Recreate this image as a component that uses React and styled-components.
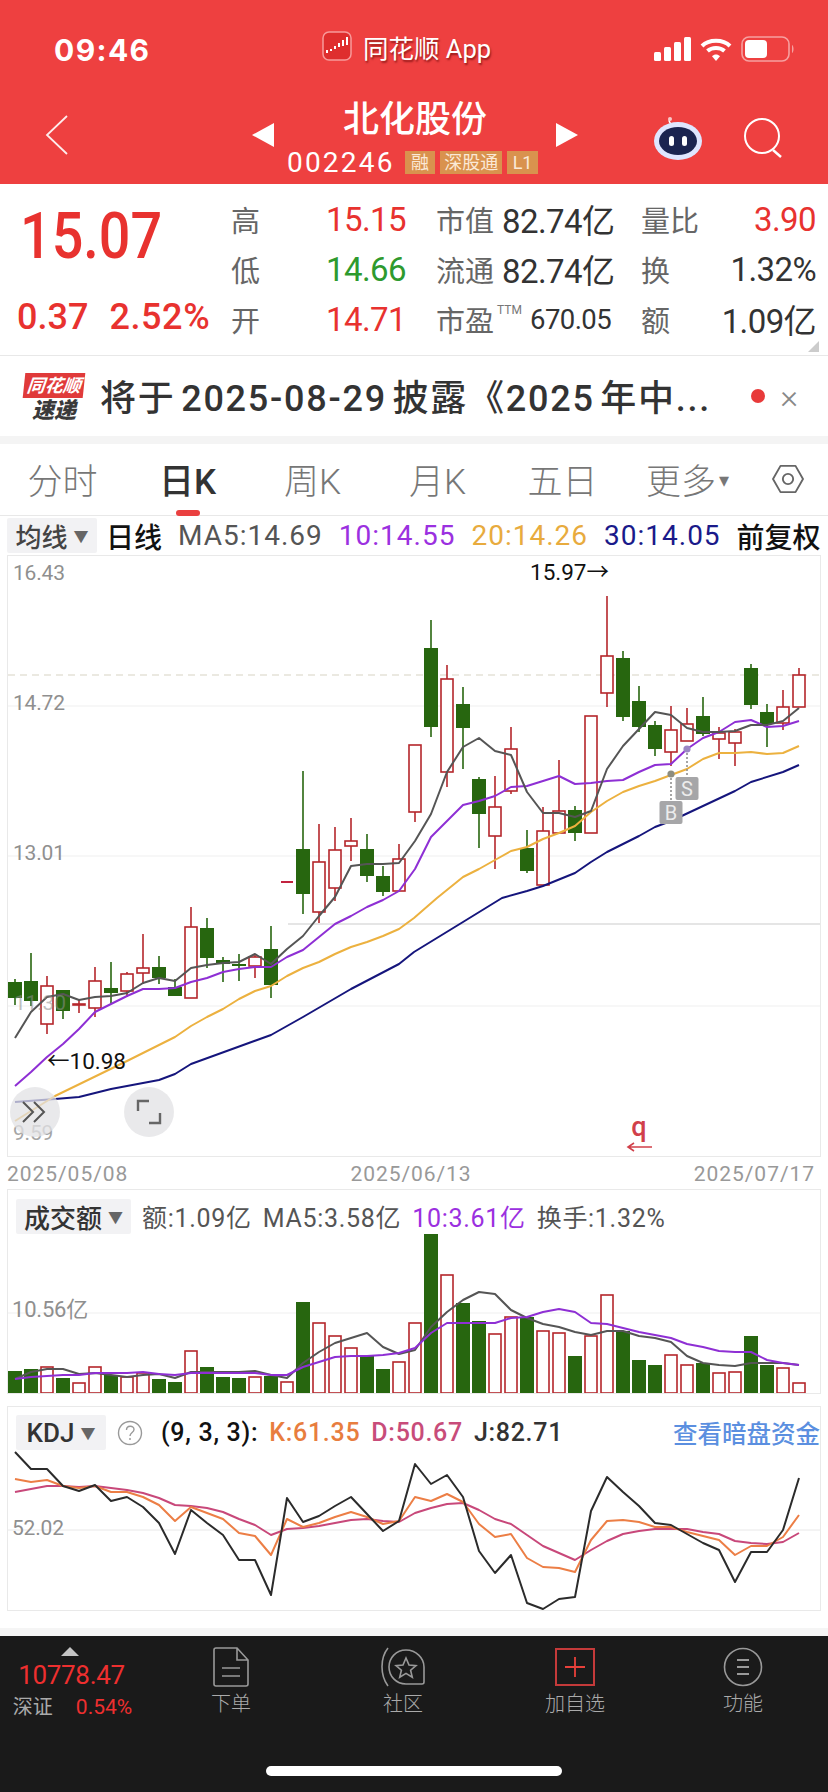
import styled, { createGlobalStyle } from "styled-components";

const FONT = `Roboto, "Noto Sans CJK SC", sans-serif`;
const RED = "#e8322f";
const CANDLE_RED = "#b5262b";
const CANDLE_GREEN = "#27660f";

const GlobalStyle = createGlobalStyle`
  * { box-sizing: border-box; }
  html, body { margin: 0; padding: 0; background: #fff; }
  body { font-family: ${FONT}; }
`;

const Page = styled.div`
  width: 828px;
  height: 1792px;
  display: flex;
  flex-direction: column;
  overflow: hidden;
  background: #fff;
`;

/* header */
const Header = styled.header`
  height: 184px;
  flex: none;
  background: #ee4040;
  color: #fff;
`;
const StatusBar = styled.div`
  height: 92px;
  display: grid;
  grid-template-columns: 268px 1fr auto;
  align-items: center;
  padding: 0 33px 0 54px;
`;
const Clock = styled.div`
  font-family: Inter, sans-serif;
  font-size: 30px;
  font-weight: 700;
  letter-spacing: 1.4px;
  margin-top: 8px;
`;
const AppLabel = styled.div`
  display: flex;
  align-items: center;
  gap: 11px;
  font-size: 25.5px;
  text-shadow: 1px 2px 2px rgba(90, 0, 0, 0.6);
`;
const StatusIcons = styled.div`
  display: flex;
  align-items: center;
  gap: 9px;
  margin-top: 6px;
`;
const NavBar = styled.div`
  height: 92px;
  display: grid;
  grid-template-columns: 1fr auto 1fr;
  align-items: center;
  padding: 0 43px 0 45px;
`;
const NavRight = styled.div`
  display: flex;
  justify-content: flex-end;
  align-items: center;
  gap: 40px;
  margin-top: -1px;
`;
const NavBack = styled.div`
  margin-top: -2px;
`;
const NavCenter = styled.div`
  display: flex;
  align-items: center;
  gap: 13px;
`;
const Arrow = styled.div`
  width: 0;
  height: 0;
  border-top: 12px solid transparent;
  border-bottom: 12px solid transparent;
  ${(p) => (p.$right ? "border-left: 22px solid #fff;" : "border-right: 22px solid #fff;")}
  margin-top: -7px;
`;
const TitleBox = styled.div`
  display: flex;
  flex-direction: column;
  align-items: center;
  height: 92px;
  width: 256px;
`;
const Title = styled.div`
  font-size: 36px;
  font-weight: 500;
  line-height: 48px;
  margin-top: 4px;
`;
const CodeRow = styled.div`
  display: flex;
  align-items: center;
  height: 24px;
  margin-top: 6px;
  align-self: stretch;
`;
const Code = styled.span`
  font-size: 28px;
  letter-spacing: 2.2px;
  margin-right: 10px;
`;
const Tag = styled.span`
  background: #d9924e;
  color: #fbe9d6;
  font-size: 18px;
  line-height: 23px;
  height: 23px;
  width: ${(p) => p.$w}px;
  text-align: center;
  margin-right: 5px;
`;

/* quote */
const Quote = styled.section`
  height: 172px;
  flex: none;
  position: relative;
  display: flex;
  border-bottom: 1px solid #e8e8e8;
`;
const PriceBox = styled.div`
  width: 231px;
  flex: none;
  padding: 15px 0 0 17px;
`;
const BigPrice = styled.div`
  font-size: 64px;
  font-weight: 500;
  line-height: 76px;
  color: ${RED};
  margin-left: 3px;
  transform: scaleX(0.87);
  transform-origin: left;
`;
const ChangeRow = styled.div`
  display: flex;
  gap: 21px;
  font-size: 36px;
  font-weight: 500;
  line-height: 44px;
  margin-top: 20px;
  color: ${RED};
  span + span { letter-spacing: 0.6px; }
`;
const StatGrid = styled.div`
  display: grid;
  grid-template-columns: repeat(3, 175px);
  grid-auto-rows: 50px;
  column-gap: 30px;
  padding-top: 10px;
`;
const Stat = styled.div`
  display: flex;
  justify-content: space-between;
  align-items: center;
  gap: 8px;
`;
const StatLabel = styled.span`
  font-size: 29px;
  color: #666;
  white-space: nowrap;
  sup {
    font-size: 12px;
    vertical-align: 18px;
    line-height: 0;
    margin-left: 3px;
    color: #777;
  }
`;
const StatValue = styled.span`
  font-size: ${(p) => p.$size || 33}px;
  letter-spacing: -0.6px;
  color: ${(p) => p.$color || "#333"};
  white-space: nowrap;
`;
const Corner = styled.div`
  position: absolute;
  right: 9px;
  bottom: 3px;
  width: 0;
  height: 0;
  border-left: 11px solid transparent;
  border-bottom: 11px solid #ccc;
`;

/* notice */
const Notice = styled.section`
  height: 80px;
  flex: none;
  display: flex;
  align-items: center;
  padding: 0 30px 0 23px;
`;
const Logo = styled.div`
  width: 62px;
  flex: none;
  display: flex;
  flex-direction: column;
  align-items: center;
  margin-top: 4px;
`;
const LogoTop = styled.div`
  width: 60px;
  height: 25px;
  background: #e03a3a;
  color: #fff;
  font-size: 18px;
  font-style: italic;
  font-weight: 700;
  line-height: 25px;
  text-align: center;
  transform: skewX(-6deg);
`;
const LogoBottom = styled.div`
  font-size: 22px;
  font-style: italic;
  font-weight: 900;
  line-height: 26px;
  color: #3a3a3a;
`;
const NoticeText = styled.div`
  flex: 1;
  margin-left: 15px;
  font-size: 36px;
  font-weight: 500;
  letter-spacing: 1.75px;
  word-spacing: -5px;
  color: #333;
  white-space: nowrap;
  margin-top: -2px;
`;
const RedDot = styled.i`
  width: 14px;
  height: 14px;
  border-radius: 50%;
  background: #e83a3a;
  margin-right: 15px;
`;
const CloseMark = styled.span`
  font-size: 34px;
  color: #888;
  font-weight: 300;
`;
const Band = styled.div`
  height: 8px;
  flex: none;
  background: #f4f4f4;
`;

/* tabs */
const Tabs = styled.nav`
  height: 72px;
  flex: none;
  display: grid;
  grid-template-columns: repeat(6, 125px) 1fr;
  align-items: center;
  border-bottom: 1px solid #e8e8e8;
`;
const Tab = styled.div`
  position: relative;
  height: 72px;
  padding-bottom: 4px;
  display: flex;
  align-items: center;
  justify-content: center;
  font-size: 35px;
  font-weight: ${(p) => (p.$active ? 500 : 300)};
  color: ${(p) => (p.$active ? "#333" : "#777")};
  white-space: nowrap;
  &::after {
    content: "";
    display: ${(p) => (p.$active ? "block" : "none")};
    position: absolute;
    left: 50%;
    margin-left: -12px;
    bottom: 0;
    width: 24px;
    height: 6px;
    border-radius: 3px;
    background: #ea4040;
  }
  small {
    font-size: 20px;
    margin-left: 3px;
    margin-top: 4px;
  }
`;
const TabIcon = styled.div`
  display: flex;
  justify-content: center;
  padding-right: 2px;
  margin-top: -3px;
`;

/* MA row */
const MaRow = styled.div`
  height: 39px;
  flex: none;
  display: flex;
  align-items: center;
  gap: 16px;
  padding-left: 7px;
  font-size: 28px;
  letter-spacing: 1px;
  white-space: nowrap;
`;
const Selector = styled.div`
  display: flex;
  align-items: center;
  justify-content: center;
  gap: 6px;
  background: #f2f2f4;
  color: ${(p) => p.$color || "#444"};
  font-size: ${(p) => p.$size || 26}px;
  letter-spacing: 0;
  width: ${(p) => p.$w}px;
  height: 35px;
  font-weight: 500;
  border-radius: 2px;
  small {
    font-size: 15px;
    color: #666;
  }
`;
const MaText = styled.span`
  color: ${(p) => p.$color || "#555"};
`;
const DarkText = styled.span`
  color: #111;
  font-weight: 500;
  letter-spacing: 0;
  margin-left: ${(p) => p.$ml || 0}px;
`;

/* charts */
const Panel = styled.section`
  position: relative;
  flex: none;
  width: 814px;
  height: ${(p) => p.$h}px;
  margin-left: 7px;
  margin-bottom: ${(p) => p.$mb || 0}px;
  border: 1px solid #e9e9e9;
  overflow: hidden;
  svg { display: block; position: absolute; left: -1px; top: -1px; }
`;
const PanelHead = styled.div`
  position: relative;
  z-index: 2;
  display: flex;
  align-items: center;
  gap: 11px;
  padding: 8px 0 0 8px;
  font-size: 25px;
  letter-spacing: 0.7px;
  white-space: nowrap;
`;
const HeadText = styled.span`
  color: ${(p) => p.$color || "#555"};
  font-weight: ${(p) => p.$w || 400};
  margin-left: ${(p) => p.$ml || 0}px;
`;
const HeadLink = styled.span`
  margin-left: auto;
  color: #5b8fe0;
  letter-spacing: 0;
  font-weight: 500;
  font-size: 24.5px;
`;
const RoundButton = styled.div`
  position: absolute;
  top: 531px;
  left: ${(p) => p.$left}px;
  width: 50px;
  height: 50px;
  border-radius: 50%;
  background: rgba(226, 226, 228, 0.75);
  display: flex;
  align-items: center;
  justify-content: center;
  svg { position: static; }
`;
const DateRow = styled.div`
  height: 32px;
  flex: none;
  display: flex;
  align-items: center;
  justify-content: space-between;
  padding: 2px 13px 0 7px;
  font-size: 21px;
  letter-spacing: 0.95px;
  color: #999;
`;
const AxisText = styled.text`
  font-family: ${FONT};
  font-size: ${(p) => p.$size || 21}px;
  font-weight: ${(p) => p.$w || 400};
  letter-spacing: ${(p) => (p.$size ? 0 : -0.2)}px;
  fill: ${(p) => p.$fill || "#8f8f8f"};
  opacity: ${(p) => p.$op || 1};
`;

/* footer */
const Bottom = styled.div`
  height: 17px;
  flex: none;
`;
const Strip = styled.div`
  height: 8px;
  flex: none;
  background: #f5f5f5;
`;
const Footer = styled.footer`
  flex: 1;
  display: flex;
  flex-direction: column;
  background: #1a1a1a;
`;
const FooterRow = styled.div`
  display: flex;
  padding-top: 11px;
`;
const IndexBox = styled.div`
  width: 145px;
  flex: none;
  display: flex;
  flex-direction: column;
  align-items: center;
`;
const UpMark = styled.div`
  width: 0;
  height: 0;
  border-left: 9px solid transparent;
  border-right: 9px solid transparent;
  border-bottom: 9px solid #c4c4c4;
  margin-left: -5px;
`;
const IndexValue = styled.div`
  font-size: 26px;
  letter-spacing: -0.3px;
  line-height: 34px;
  margin-top: 2px;
  margin-left: -2px;
  color: #ee2f2f;
`;
const IndexSub = styled.div`
  display: flex;
  gap: 23px;
  align-items: center;
  font-size: 21px;
  line-height: 30px;
  color: #ee2f2f;
  span:first-child { color: #aaa; font-size: 20px; }
`;
const FooterItem = styled.div`
  width: ${(p) => p.$w || 172}px;
  flex: none;
  display: flex;
  flex-direction: column;
  align-items: center;
  color: #aaa;
  font-size: 20px;
  font-weight: 300;
  svg { display: block; height: 40px; }
  span { line-height: 28px; margin-top: 3px; }
`;
const HomeBar = styled.div`
  width: 296px;
  height: 10px;
  border-radius: 5px;
  background: #fff;
  align-self: center;
  margin: auto 0 16px;
`;

/* data */
const X = (i) => 15 + 16 * i;
const toPts = (ys) => ys.map((y, i) => `${X(i)},${y}`).join(" ");
const toPairs = (arr) => arr.map(([x, y]) => `${x},${y}`).join(" ");

// [up, top, bottom, wickTop, wickBottom]
const candles = [
  [0, 983, 999, 980, 1006], [0, 982, 1002, 954, 1007], [1, 987, 1025, 977, 1035], [0, 991, 1012, 991, 1020],
  [1, 1005, 1006, 1001, 1014], [1, 982, 1009, 968, 1018], [0, 989, 994, 963, 1005], [1, 975, 992, 973, 998],
  [1, 969, 974, 935, 985], [0, 968, 979, 957, 985], [0, 988, 997, 980, 997], [1, 928, 999, 908, 999],
  [0, 929, 959, 919, 969], [0, 961, 965, 958, 983], [0, 965, 967, 955, 982], [1, 958, 967, 955, 979],
  [0, 950, 986, 927, 999], [1, 883, 883, 883, 883], [0, 850, 895, 772, 915], [1, 863, 913, 825, 924],
  [1, 851, 889, 828, 902], [1, 842, 847, 819, 862], [0, 850, 877, 835, 883], [0, 877, 893, 867, 897],
  [1, 860, 892, 845, 892], [1, 746, 813, 746, 823], [0, 649, 728, 621, 738], [1, 680, 773, 666, 788],
  [0, 705, 729, 688, 770], [0, 780, 815, 778, 849], [1, 808, 837, 777, 870], [1, 750, 792, 728, 795],
  [0, 849, 872, 831, 874], [1, 832, 886, 808, 886], [1, 812, 834, 761, 834], [0, 811, 834, 807, 842],
  [1, 717, 834, 717, 834], [1, 657, 694, 597, 708], [0, 659, 718, 652, 722], [0, 702, 728, 687, 733],
  [0, 726, 750, 722, 757], [1, 731, 753, 707, 767], [1, 725, 742, 709, 742], [0, 717, 735, 698, 737],
  [1, 734, 740, 728, 760], [1, 733, 744, 730, 767], [0, 669, 706, 665, 710], [0, 713, 725, 705, 748],
  [1, 708, 724, 691, 731], [1, 676, 708, 669, 708],
];

const ma5 = [1039, 1013, 998, 995, 1001, 998, 997, 994, 984, 979, 982, 969, 966, 964, 963, 955, 965, 950, 937, 917, 898, 867, 865, 865, 864, 842, 815, 773, 748, 739, 752, 756, 793, 814, 814, 818, 812, 770, 747, 730, 713, 716, 729, 733, 733, 732, 726, 726, 722, 709];
const ma10 = [1087, 1073, 1058, 1045, 1030, 1013, 1005, 997, 990, 990, 989, 983, 979, 973, 970, 968, 968, 958, 951, 938, 925, 917, 908, 901, 892, 870, 838, 822, 806, 802, 797, 788, 787, 782, 777, 785, 784, 782, 781, 773, 766, 765, 750, 739, 733, 723, 721, 728, 727, 722];
const ma20 = [[15, 1122], [55, 1097], [127, 1062], [175, 1038], [191, 1027], [207, 1018], [223, 1010], [239, 1000], [255, 992], [271, 987], [287, 977], [303, 969], [319, 963], [335, 955], [351, 948], [367, 943], [383, 937], [399, 930], [414, 919], [437, 899], [463, 878], [479, 870], [495, 861], [511, 852], [527, 848], [543, 840], [559, 834], [575, 827], [591, 813], [607, 802], [623, 793], [639, 787], [655, 782], [671, 776], [687, 770], [703, 760], [719, 754], [735, 754], [751, 753], [767, 755], [783, 754], [799, 747]];
const ma30 = [[15, 1103], [55, 1100], [79, 1098], [111, 1090], [159, 1081], [175, 1075], [191, 1065], [271, 1036], [303, 1018], [351, 990], [399, 965], [414, 953], [463, 923], [502, 899], [527, 892], [543, 887], [575, 874], [591, 863], [607, 853], [639, 837], [655, 828], [671, 822], [703, 807], [735, 792], [751, 783], [783, 773], [799, 766]];

const volTops = [1371, 1369, 1367, 1378, 1383, 1367, 1375, 1377, 1373, 1379, 1382, 1351, 1367, 1377, 1378, 1377, 1376, 1382, 1302, 1323, 1336, 1348, 1355, 1369, 1362, 1323, 1234, 1275, 1303, 1321, 1334, 1317, 1317, 1331, 1333, 1356, 1336, 1295, 1331, 1360, 1365, 1355, 1365, 1363, 1373, 1372, 1336, 1365, 1368, 1383];
const volMa5 = [1379, 1372, 1369, 1369, 1374, 1373, 1375, 1377, 1375, 1374, 1378, 1372, 1372, 1372, 1372, 1371, 1375, 1378, 1363, 1352, 1343, 1338, 1333, 1347, 1354, 1350, 1327, 1312, 1300, 1292, 1294, 1310, 1318, 1324, 1327, 1332, 1335, 1331, 1331, 1336, 1338, 1342, 1356, 1363, 1365, 1366, 1363, 1363, 1363, 1365];
const volMa10 = [1379, 1377, 1376, 1375, 1375, 1373, 1373, 1373, 1372, 1374, 1375, 1373, 1373, 1373, 1373, 1373, 1375, 1375, 1367, 1362, 1357, 1356, 1356, 1355, 1353, 1348, 1333, 1323, 1323, 1323, 1323, 1318, 1317, 1312, 1309, 1312, 1323, 1324, 1328, 1332, 1335, 1338, 1344, 1347, 1351, 1352, 1352, 1360, 1363, 1365];

const kdjJ = [1452, 1469, 1469, 1486, 1491, 1485, 1501, 1497, 1507, 1523, 1554, 1510, 1523, 1535, 1560, 1560, 1595, 1498, 1522, 1516, 1506, 1497, 1514, 1531, 1521, 1464, 1484, 1475, 1497, 1551, 1573, 1555, 1603, 1609, 1599, 1597, 1511, 1477, 1492, 1506, 1523, 1525, 1534, 1543, 1550, 1582, 1552, 1552, 1530, 1478];
const kdjK = [1479, 1482, 1480, 1486, 1488, 1486, 1492, 1492, 1497, 1505, 1521, 1507, 1513, 1519, 1533, 1536, 1555, 1519, 1527, 1523, 1517, 1512, 1517, 1524, 1521, 1497, 1501, 1494, 1502, 1524, 1537, 1534, 1558, 1567, 1568, 1572, 1540, 1521, 1520, 1522, 1527, 1527, 1532, 1536, 1540, 1555, 1546, 1546, 1537, 1515];
const kdjD = [1492, 1489, 1486, 1486, 1487, 1486, 1488, 1490, 1493, 1498, 1505, 1506, 1508, 1512, 1519, 1525, 1535, 1529, 1528, 1526, 1523, 1520, 1519, 1521, 1522, 1513, 1508, 1504, 1503, 1510, 1519, 1524, 1535, 1546, 1553, 1560, 1550, 1541, 1534, 1531, 1529, 1529, 1529, 1532, 1534, 1541, 1543, 1544, 1542, 1533];

const Line = ({ points, color, width = 2 }) => (
  <polyline points={points} fill="none" stroke={color} strokeWidth={width} strokeLinejoin="round" />
);

const Candle = ({ i, c }) => {
  const [up, top, bottom, wt, wb] = c;
  const x = X(i);
  const color = up ? CANDLE_RED : CANDLE_GREEN;
  if (top === bottom && wt === wb) {
    return <rect x={x - 6} y={top - 1} width={12} height={2} fill="#c2233f" />;
  }
  return (
    <g>
      <line x1={x} x2={x} y1={wt} y2={wb} stroke={color} strokeWidth={1.6} />
      {up ? (
        <rect x={x - 6} y={top} width={12} height={Math.max(bottom - top, 1)} fill="#fff" stroke={color} strokeWidth={1.6} />
      ) : (
        <rect x={x - 7} y={top} width={14} height={bottom - top} fill={color} />
      )}
    </g>
  );
};

const TradeMark = ({ x, dotY, boxY, label }) => (
  <g>
    <line x1={x} x2={x} y1={dotY} y2={boxY} stroke="#8f8f8f" strokeWidth={1.6} strokeDasharray="2 2" />
    <circle cx={x} cy={dotY} r={3.6} fill={label === "B" ? "#8d8d80" : "#9a86c4"} />
    <rect x={x - 11.5} y={boxY} width={23} height={23} rx={2} fill="#a6a6a8" />
    <AxisText x={x} y={boxY + 19} textAnchor="middle" $fill="#ececec" $size={20}>{label}</AxisText>
  </g>
);

const MainChart = () => (
  <svg width="814" height="601" viewBox="7 556 814 601">
    {[707, 857, 1007].map((y) => (
      <line key={y} x1={8} x2={820} y1={y} y2={y} stroke="#efefef" strokeWidth={1} />
    ))}
    <line x1={288} x2={820} y1={925} y2={925} stroke="#dcdcdc" strokeWidth={1.5} />
    <line x1={8} x2={820} y1={676} y2={676} stroke="#d8d4c4" strokeWidth={1.2} strokeDasharray="7 5" />
    <AxisText x={13} y={581}>16.43</AxisText>
    <AxisText x={13} y={711}>14.72</AxisText>
    <AxisText x={13} y={861}>13.01</AxisText>
    {candles.map((c, i) => <Candle key={i} i={i} c={c} />)}
    <Line points={toPairs(ma30)} color="#15157c" />
    <Line points={toPairs(ma20)} color="#ecb13f" />
    <Line points={toPts(ma10)} color="#8e2fd4" />
    <Line points={toPts(ma5)} color="#555" />
    <AxisText x={14} y={1011} $op={0.55}>11.30</AxisText>
    <AxisText x={13} y={1141} $op={0.8}>9.59</AxisText>
    <AxisText x={530} y={581} $fill="#111" $size={22.5}>15.97→</AxisText>
    <AxisText x={47} y={1070} $fill="#111" $size={22.5}>←10.98</AxisText>
    <TradeMark x={671} dotY={775} boxY={802} label="B" />
    <TradeMark x={687} dotY={750} boxY={778} label="S" />
    <AxisText x={639} y={1137} textAnchor="middle" $fill="#d1404a" $size={27} $w={500}>q</AxisText>
    <path d="M652 1148H628M634 1144l-6 4 6 4" fill="none" stroke="#d1404a" strokeWidth={1.6} />
  </svg>
);

const VolumeChart = () => (
  <svg width="814" height="205" viewBox="7 1189 814 205">
    <line x1={8} x2={820} y1={1313} y2={1313} stroke="#efefef" strokeWidth={1} />
    <AxisText x={12} y={1317} style={{ fontSize: 22 }}>10.56亿</AxisText>
    {volTops.map((top, i) =>
      candles[i][0] ? (
        <rect key={i} x={X(i) - 6} y={top} width={12} height={1393 - top} fill="#fff" stroke={CANDLE_RED} strokeWidth={1.6} />
      ) : (
        <rect key={i} x={X(i) - 7} y={top} width={14} height={1394 - top} fill={CANDLE_GREEN} />
      )
    )}
    <Line points={toPts(volMa5)} color="#555" />
    <Line points={toPts(volMa10)} color="#8e2fd4" />
  </svg>
);

const KdjChart = () => (
  <svg width="814" height="205" viewBox="7 1406 814 205">
    <line x1={8} x2={820} y1={1530} y2={1530} stroke="#e8e8e8" strokeWidth={1} />
    <AxisText x={12} y={1535}>52.02</AxisText>
    <Line points={toPts(kdjD)} color="#c8487a" />
    <Line points={toPts(kdjK)} color="#ec7e45" />
    <Line points={toPts(kdjJ)} color="#2b2b2b" />
  </svg>
);

const App = () => (
  <Page>
    <GlobalStyle />
    <Header>
      <StatusBar>
        <Clock>09:46</Clock>
        <AppLabel>
          <svg width="30" height="30" viewBox="0 0 30 30">
            <rect x="1" y="1" width="28" height="28" rx="6" fill="#df2e2e" stroke="#f79a9a" strokeWidth="1.5" />
            <path d="M5 19v3M9 18v2M13 15v3M17 12v4M21 9v6M25 6v8" stroke="#fff" strokeWidth="2" />
          </svg>
          同花顺 App
        </AppLabel>
        <StatusIcons>
          <svg width="37" height="24" viewBox="0 0 37 24">
            <rect x="0" y="15" width="7" height="9" rx="1.5" fill="#fff" />
            <rect x="10" y="10" width="7" height="14" rx="1.5" fill="#fff" />
            <rect x="20" y="5" width="7" height="19" rx="1.5" fill="#fff" />
            <rect x="30" y="0" width="7" height="24" rx="1.5" fill="#fff" />
          </svg>
          <svg width="32" height="24" viewBox="0 0 32 24">
            <path d="M2 9C9 2 23 2 30 9" fill="none" stroke="#fff" strokeWidth="4" />
            <path d="M7.5 14C12 10 20 10 24.5 14" fill="none" stroke="#fff" strokeWidth="4" />
            <path d="M12 19.2c2.4-2.2 5.6-2.2 8 0L16 24z" fill="#fff" />
          </svg>
          <svg width="54" height="26" viewBox="0 0 54 26">
            <rect x="1" y="1" width="47" height="24" rx="7" fill="none" stroke="#fff" strokeOpacity="0.5" strokeWidth="1.6" />
            <rect x="4" y="4" width="22" height="18" rx="4" fill="#fff" />
            <path d="M51 9c2 1 2 7 0 8z" fill="#fff" fillOpacity="0.5" />
          </svg>
        </StatusIcons>
      </StatusBar>
      <NavBar>
        <NavBack>
          <svg width="24" height="40" viewBox="0 0 24 40">
            <path d="M22 1L2 20l20 19" fill="none" stroke="#fff" strokeOpacity="0.9" strokeWidth="1.8" />
          </svg>
        </NavBack>
        <NavCenter>
          <Arrow />
          <TitleBox>
            <Title>北化股份</Title>
            <CodeRow>
              <Code>002246</Code>
              <Tag $w={32}>融</Tag>
              <Tag $w={64}>深股通</Tag>
              <Tag $w={32}>L1</Tag>
            </CodeRow>
          </TitleBox>
          <Arrow $right />
        </NavCenter>
        <NavRight>
          <svg width="50" height="44" viewBox="0 0 50 44">
            <path d="M18 8c-2-2-2-4-1-5" fill="none" stroke="#fff" strokeWidth="1.5" />
            <circle cx="17" cy="3" r="2" fill="#f7c9c9" />
            <ellipse cx="25" cy="25" rx="24" ry="19" fill="#dfe6ff" />
            <ellipse cx="25" cy="25" rx="19" ry="14" fill="#1b2450" />
            <rect x="16" y="20" width="5" height="10" rx="2.5" fill="#fff" />
            <rect x="29" y="20" width="5" height="10" rx="2.5" fill="#fff" />
          </svg>
          <svg width="42" height="40" viewBox="0 0 42 40">
            <ellipse cx="19" cy="18" rx="17" ry="17" fill="none" stroke="#fff" strokeWidth="2" />
            <path d="M30 32l8 7" stroke="#fff" strokeWidth="2.4" />
          </svg>
        </NavRight>
      </NavBar>
    </Header>

    <Quote>
      <PriceBox>
        <BigPrice>15.07</BigPrice>
        <ChangeRow>
          <span>0.37</span>
          <span>2.52%</span>
        </ChangeRow>
      </PriceBox>
      <StatGrid>
        <Stat><StatLabel>高</StatLabel><StatValue $color={RED}>15.15</StatValue></Stat>
        <Stat><StatLabel>市值</StatLabel><StatValue>82.74亿</StatValue></Stat>
        <Stat><StatLabel>量比</StatLabel><StatValue $color={RED}>3.90</StatValue></Stat>
        <Stat><StatLabel>低</StatLabel><StatValue $color="#2e9a2e">14.66</StatValue></Stat>
        <Stat><StatLabel>流通</StatLabel><StatValue>82.74亿</StatValue></Stat>
        <Stat><StatLabel>换</StatLabel><StatValue>1.32%</StatValue></Stat>
        <Stat><StatLabel>开</StatLabel><StatValue $color={RED}>14.71</StatValue></Stat>
        <Stat><StatLabel>市盈<sup>TTM</sup></StatLabel><StatValue $size={27.5}>670.05</StatValue></Stat>
        <Stat><StatLabel>额</StatLabel><StatValue>1.09亿</StatValue></Stat>
      </StatGrid>
      <Corner />
    </Quote>

    <Notice>
      <Logo>
        <LogoTop>同花顺</LogoTop>
        <LogoBottom>速递</LogoBottom>
      </Logo>
      <NoticeText>将于 2025-08-29 披露《2025 年中...</NoticeText>
      <RedDot />
      <CloseMark>×</CloseMark>
    </Notice>
    <Band />

    <Tabs>
      <Tab>分时</Tab>
      <Tab $active>日K</Tab>
      <Tab>周K</Tab>
      <Tab>月K</Tab>
      <Tab>五日</Tab>
      <Tab>更多<small>▾</small></Tab>
      <TabIcon>
        <svg width="36" height="30" viewBox="0 0 36 32">
          <path d="M10 2h16l8 14-8 14H10L2 16z" fill="none" stroke="#666" strokeWidth="2" strokeLinejoin="round" />
          <circle cx="18" cy="16" r="5.5" fill="none" stroke="#666" strokeWidth="2" />
        </svg>
      </TabIcon>
    </Tabs>

    <MaRow>
      <Selector $w={90}>均线<small>▼</small></Selector>
      <DarkText $ml={-7}>日线</DarkText>
      <MaText>MA5:14.69</MaText>
      <MaText $color="#9b30e0">10:14.55</MaText>
      <MaText $color="#e8ab3e">20:14.26</MaText>
      <MaText $color="#1a1a8a">30:14.05</MaText>
      <DarkText>前复权</DarkText>
    </MaRow>

    <Panel $h={602}>
      <MainChart />
      <RoundButton $left={2}>
        <svg width="30" height="26" viewBox="0 0 30 26">
          <path d="M3 3l10 10L3 23M14 3l10 10-10 10" fill="none" stroke="#555" strokeWidth="2" />
        </svg>
      </RoundButton>
      <RoundButton $left={116}>
        <svg width="28" height="28" viewBox="0 0 28 28">
          <path d="M3 13V3h11M25 15v10H14" fill="none" stroke="#666" strokeWidth="2.4" />
        </svg>
      </RoundButton>
    </Panel>
    <DateRow>
      <span>2025/05/08</span>
      <span>2025/06/13</span>
      <span>2025/07/17</span>
    </DateRow>

    <Panel $h={205} $mb={12}>
      <VolumeChart />
      <PanelHead>
        <Selector $w={115} $color="#333">成交额<small>▼</small></Selector>
        <HeadText>额:1.09亿</HeadText>
        <HeadText>MA5:3.58亿</HeadText>
        <HeadText $color="#9b30e0">10:3.61亿</HeadText>
        <HeadText>换手:1.32%</HeadText>
      </PanelHead>
    </Panel>

    <Panel $h={205}>
      <KdjChart />
      <PanelHead>
        <Selector $w={90} $color="#333">KDJ<small>▼</small></Selector>
        <svg width="26" height="26" viewBox="0 0 26 26" style={{ position: "static" }}>
          <circle cx="13" cy="13" r="11.5" fill="none" stroke="#999" strokeWidth="1.4" />
          <path d="M9.5 10c0-5 7.5-5 7.5-.5 0 3-4 3-4 6.5M13 18v2" fill="none" stroke="#999" strokeWidth="1.4" />
        </svg>
        <HeadText $color="#111" $w={500} $ml={7}>(9, 3, 3):</HeadText>
        <HeadText $color="#e87d3e" $w={500}>K:61.35</HeadText>
        <HeadText $color="#c84c7a" $w={500}>D:50.67</HeadText>
        <HeadText $color="#333" $w={500}>J:82.71</HeadText>
        <HeadLink>查看暗盘资金</HeadLink>
      </PanelHead>
    </Panel>

    <Bottom />
    <Strip />
    <Footer>
      <FooterRow>
        <IndexBox>
          <UpMark />
          <IndexValue>10778.47</IndexValue>
          <IndexSub>
            <span>深证</span>
            <span>0.54%</span>
          </IndexSub>
        </IndexBox>
        <FooterItem>
          <svg width="36" height="40" viewBox="0 0 36 40">
            <path d="M3 1h21l11 12v24a2 2 0 0 1-2 2H3a2 2 0 0 1-2-2V3a2 2 0 0 1 2-2zM24 1v12h11" fill="none" stroke="#999" strokeWidth="1.6" />
            <path d="M9 21h18M9 29h18" stroke="#999" strokeWidth="1.6" />
          </svg>
          <span>下单</span>
        </FooterItem>
        <FooterItem>
          <svg width="44" height="40" viewBox="0 0 44 40">
            <path d="M7 1C-1 11-1 28 7 39" fill="none" stroke="#999" strokeWidth="1.6" />
            <path d="M25 3C15 3 8 11 8 20c0 9 7 17 17 17h16a2 2 0 0 0 2-2V20C43 11 35 3 25 3z" fill="none" stroke="#999" strokeWidth="1.6" />
            <path d="M25 11l3 7 7 .6-5.4 4.6 1.7 7-6.3-3.8-6.3 3.8 1.7-7-5.4-4.6 7-.6z" fill="none" stroke="#999" strokeWidth="1.6" />
          </svg>
          <span>社区</span>
        </FooterItem>
        <FooterItem>
          <svg width="42" height="40" viewBox="0 0 42 40">
            <rect x="2" y="2" width="38" height="36" fill="none" stroke="#c43a3a" strokeWidth="2" />
            <path d="M21 10v20M11 20h20" stroke="#e8403a" strokeWidth="1.8" />
          </svg>
          <span>加自选</span>
        </FooterItem>
        <FooterItem $w={164}>
          <svg width="40" height="40" viewBox="0 0 40 40">
            <circle cx="20" cy="20" r="18.5" fill="none" stroke="#999" strokeWidth="1.6" />
            <path d="M14 13h12M14 20h12M14 27h12" stroke="#999" strokeWidth="2" />
          </svg>
          <span>功能</span>
        </FooterItem>
      </FooterRow>
      <HomeBar />
    </Footer>
  </Page>
);

export default App;
